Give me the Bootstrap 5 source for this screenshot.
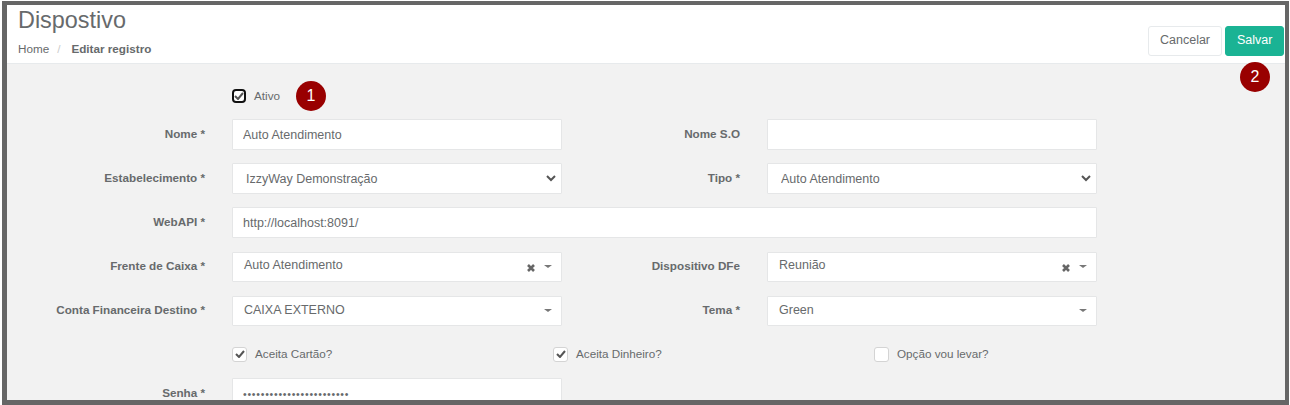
<!DOCTYPE html>
<html lang="pt-BR">
<head>
<meta charset="utf-8">
<title>Dispostivo</title>
<link rel="stylesheet" href="https://cdn.jsdelivr.net/npm/bootstrap@5.3.0/dist/css/bootstrap.min.css">
<style>
html,body{height:405px;overflow:hidden;margin:0;background:#fff}
body{font-family:"Liberation Sans",Arial,sans-serif;font-size:12px;color:#676a6c}
.shot-frame{height:404px;margin:1px 1px 0 2px;border:4px solid #666;border-left-width:5px;border-bottom-width:5px;overflow:hidden;background:#f2f2f2}
.page-head{height:59px;background:#fff;border-bottom:1px solid #e7eaec;padding:0 0 0 11px}
.page-head h2{font-size:23.4px;font-weight:400;line-height:26px;margin:2px 0 0;color:#676a6c}
.crumbs{margin-top:9px;line-height:14px;font-size:11.7px}
.crumbs .sep{color:#ccc;margin:0 9px 0 8px}
.crumbs b{color:#676a6c;margin-left:2px}
.head-btns{padding:21px 1px 0 0;gap:3px}
.btn-c,.btn-s{font-size:12.5px;height:30px;line-height:26px;padding:0 11px 2px;border-radius:3px}
.btn-c{background:#fff;border:1px solid #e7eaec;color:#676a6c;width:74px}
.btn-s{background:#1ab394;border:1px solid #1ab394;color:#fff;width:59px}
.head-right{position:relative}
.step-dot{position:absolute;width:30px;height:30px;border-radius:50%;background:#990000;color:#fff;font-size:16px;line-height:30px;text-align:center}
.dot-two{top:57px;right:15px}
.form-area{padding:17px 0 0 0;width:1091px}
.fr{height:31px;margin-bottom:13px}
.fr-s2{height:30px;margin-bottom:14px}
.fr-s2 .flabel{line-height:28px}
.fr-last{margin-bottom:14px}
.flabel{width:198px;text-align:right;font-weight:700;font-size:11.7px;line-height:30px;flex:none;margin:0}
.flabel2{width:178px}
.fgap{width:27px;flex:none}
.fbox{width:330px;flex:none}
.fwide{width:865px;flex:none}
.fld,.fld:focus{height:31px;border:1px solid #e5e6e7;border-radius:1px;background-color:#fff;color:#676a6c;font-size:12.5px;padding:0 10px;line-height:28px;box-shadow:none}
.sel-native{padding-left:13px;padding-right:28px;background-image:url("data:image/svg+xml,%3csvg xmlns='http://www.w3.org/2000/svg' viewBox='0 0 10 7'%3e%3cpath fill='none' stroke='%23555' stroke-width='2' d='M1 1l4 4 4-4'/%3e%3c/svg%3e");background-size:10px 7px;background-position:right 5px center}
.sel2,.sel2:focus{position:relative;display:block;padding-left:11px;height:30px;line-height:26px}
.sel2 .caret{position:absolute;right:9px;top:12px;width:0;height:0;border:4px solid transparent;border-top:3px solid #777;border-bottom:0}
.sel2 .clr{position:absolute;right:25px;top:10px;width:10px;height:10px}
.sel2.up{line-height:25px}
.check-row{height:18px;margin-bottom:15px;margin-top:19px;align-items:center}
.cbx{width:15px;height:15px;border:1px solid #d4d4d4;border-radius:3px;background:#fff;flex:none;display:flex;align-items:center;justify-content:center}
.cbx-focus{border:2px solid #111;border-radius:4px;width:14px;height:14px}
.cbx-text{margin-left:8px;font-size:11.7px;line-height:18px}
.ck1{width:321px}
.ativo-row{height:30px;margin-bottom:8px;align-items:center;position:relative}
.ativo-row .step-dot{position:static;margin-left:16px}
.fld.dots{letter-spacing:.75px;font-size:10.5px;line-height:24px}
</style>
</head>
<body>
<div class="shot-frame">
  <div class="page-head d-flex justify-content-between">
    <div>
      <h2>Dispostivo</h2>
      <div class="crumbs">Home<span class="sep">/</span><b>Editar registro</b></div>
    </div>
    <div class="head-right">
      <div class="head-btns d-flex">
        <button type="button" class="btn btn-c">Cancelar</button>
        <button type="button" class="btn btn-s">Salvar</button>
      </div>
      <div class="step-dot dot-two">2</div>
    </div>
  </div>
  <form class="form-area">
    <div class="d-flex ativo-row">
      <div class="flabel"></div><div class="fgap"></div>
      <span class="cbx cbx-focus"><svg width="10" height="8" viewBox="0 0 10 8"><path d="M1 4l3 3 5-6" fill="none" stroke="#555" stroke-width="2"/></svg></span>
      <span class="cbx-text">Ativo</span>
      <span class="step-dot">1</span>
    </div>
    <div class="d-flex fr">
      <label class="flabel">Nome *</label><div class="fgap"></div>
      <div class="fbox"><input class="form-control fld" value="Auto Atendimento"></div>
      <label class="flabel flabel2">Nome S.O</label><div class="fgap"></div>
      <div class="fbox"><input class="form-control fld" value=""></div>
    </div>
    <div class="d-flex fr">
      <label class="flabel">Estabelecimento *</label><div class="fgap"></div>
      <div class="fbox"><select class="form-select fld sel-native"><option>IzzyWay Demonstração</option></select></div>
      <label class="flabel flabel2">Tipo *</label><div class="fgap"></div>
      <div class="fbox"><select class="form-select fld sel-native"><option>Auto Atendimento</option></select></div>
    </div>
    <div class="d-flex fr fr-last">
      <label class="flabel">WebAPI *</label><div class="fgap"></div>
      <div class="fwide"><input class="form-control fld" value="http://localhost:8091/"></div>
    </div>
    <div class="d-flex fr-s2">
      <label class="flabel">Frente de Caixa *</label><div class="fgap"></div>
      <div class="fbox"><span class="fld sel2 up">Auto Atendimento<svg class="clr" viewBox="0 0 10 10"><path d="M2 2l6 6M8 2l-6 6" stroke="#666" stroke-width="2.6"/></svg><i class="caret"></i></span></div>
      <label class="flabel flabel2">Dispositivo DFe</label><div class="fgap"></div>
      <div class="fbox"><span class="fld sel2 up">Reunião<svg class="clr" viewBox="0 0 10 10"><path d="M2 2l6 6M8 2l-6 6" stroke="#666" stroke-width="2.6"/></svg><i class="caret"></i></span></div>
    </div>
    <div class="d-flex fr-s2">
      <label class="flabel">Conta Financeira Destino *</label><div class="fgap"></div>
      <div class="fbox"><span class="fld sel2">CAIXA EXTERNO<i class="caret"></i></span></div>
      <label class="flabel flabel2">Tema *</label><div class="fgap"></div>
      <div class="fbox"><span class="fld sel2">Green<i class="caret"></i></span></div>
    </div>
    <div class="d-flex check-row">
      <div class="flabel"></div><div class="fgap"></div>
      <div class="d-flex align-items-center ck1"><span class="cbx"><svg width="10" height="8" viewBox="0 0 10 8"><path d="M1 4l3 3 5-6" fill="none" stroke="#555" stroke-width="2"/></svg></span><span class="cbx-text">Aceita Cartão?</span></div>
      <div class="d-flex align-items-center ck1"><span class="cbx"><svg width="10" height="8" viewBox="0 0 10 8"><path d="M1 4l3 3 5-6" fill="none" stroke="#555" stroke-width="2"/></svg></span><span class="cbx-text">Aceita Dinheiro?</span></div>
      <div class="d-flex align-items-center"><span class="cbx"></span><span class="cbx-text">Opção vou levar?</span></div>
    </div>
    <div class="d-flex fr">
      <label class="flabel">Senha *</label><div class="fgap"></div>
      <div class="fbox"><input type="password" class="form-control fld dots" value="........................"></div>
    </div>
  </form>
</div>
<script src="https://cdn.jsdelivr.net/npm/bootstrap@5.3.0/dist/js/bootstrap.bundle.min.js"></script>
</body>
</html>
